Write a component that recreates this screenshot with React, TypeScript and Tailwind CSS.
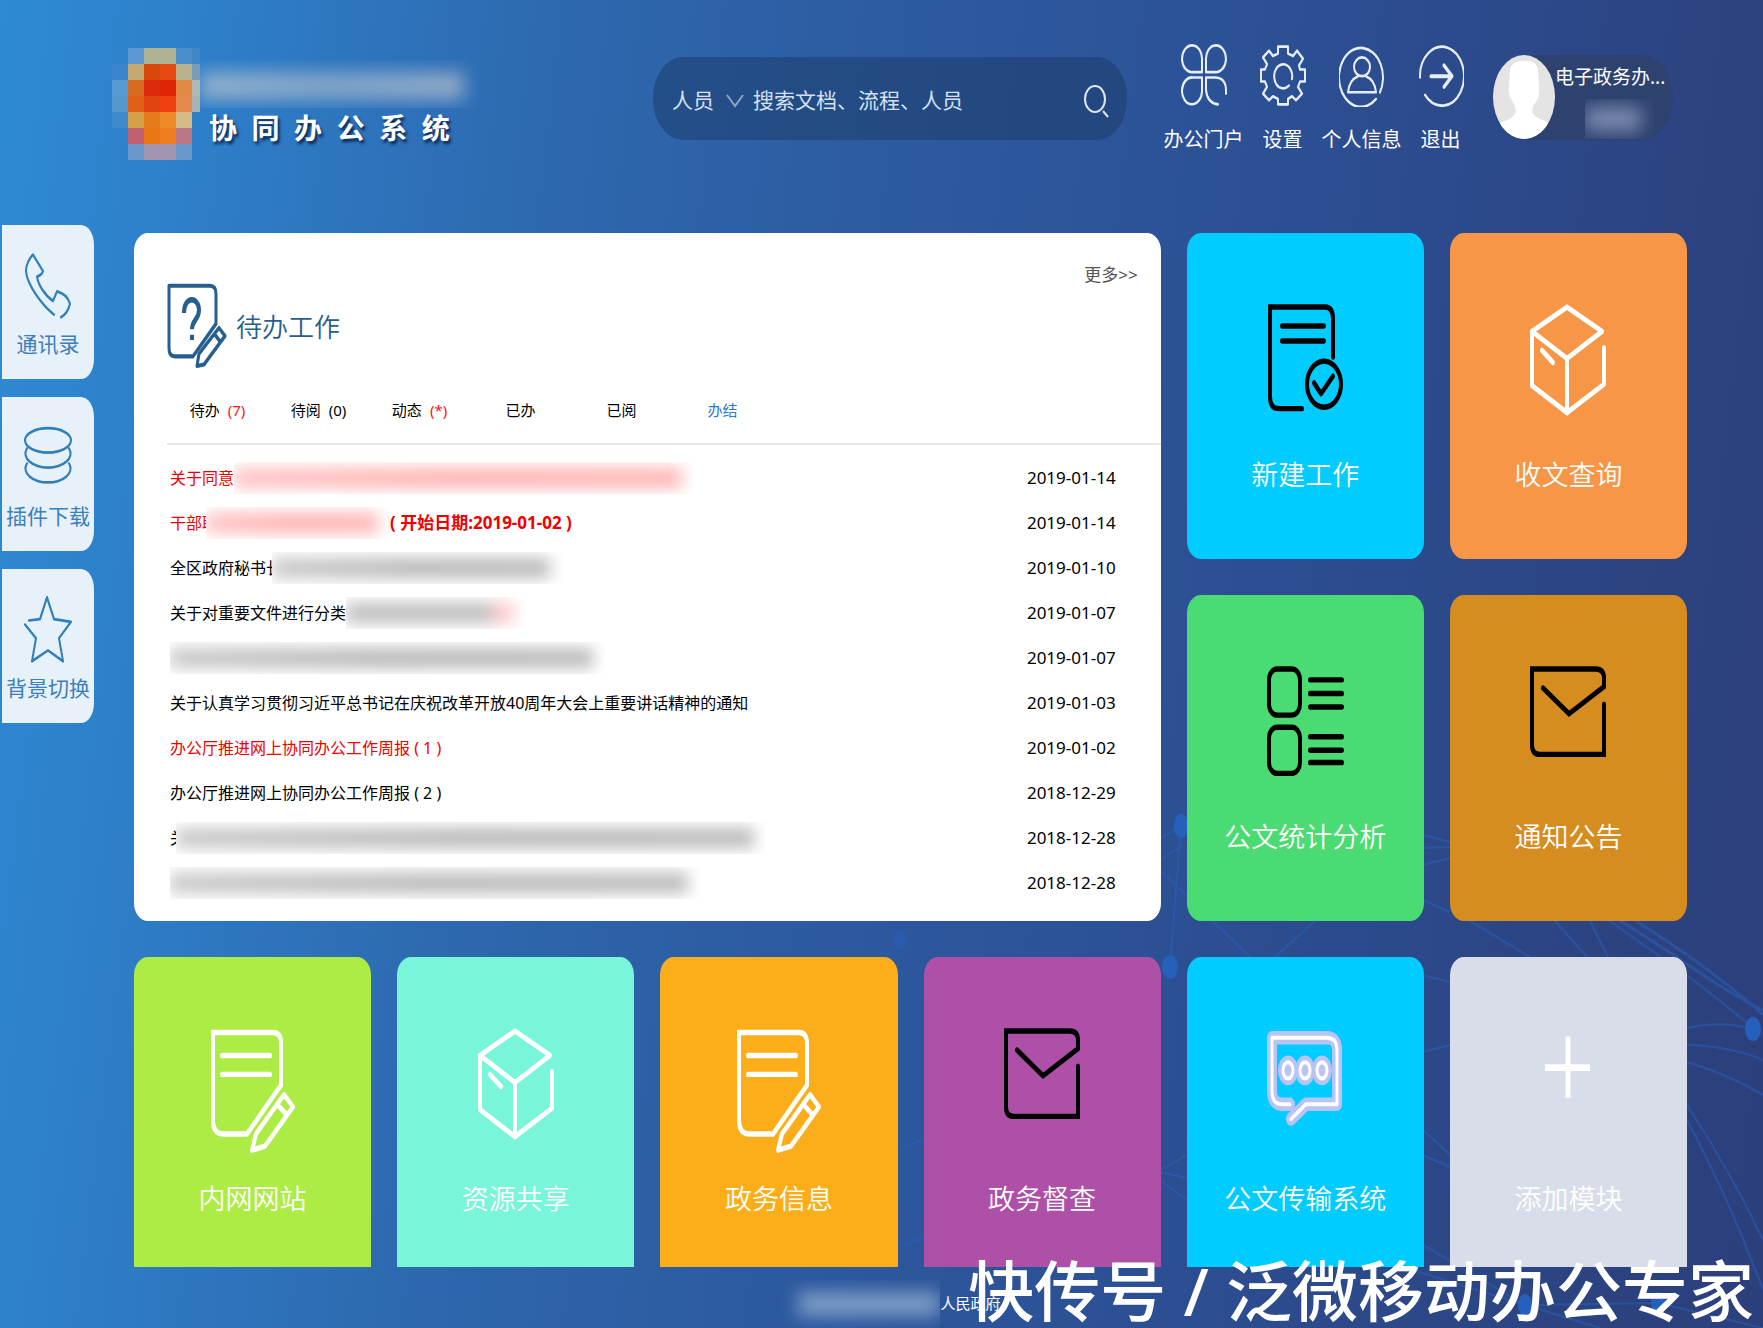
import React from 'react';
import { clsx } from 'clsx';

const BoxIcon = () => (
  <>
    <path d="M14 21 49 3 84 21 49 41 14 21V61L49 81 86 60V33" />
    <path d="M49 41V81M24 35l11 9" />
  </>
);

const EnvelopeIcon = () => (
  <path d="M86 29V66H22Q14 66 14 59V3H78Q86 3 86 10V16L51 36 25 17" strokeLinejoin="miter" />
);

const NotePencilIcon = () => (
  <>
    <path d="M10 4H70Q78 4 78 12V43L44 79H21Q10 79 10 69Z" strokeLinejoin="miter" />
    <path d="M19 21H67M19 35H67" />
    <path d="M49 91 53 79 81 50 90 59 62 88ZM74 57l10 8" />
  </>
);

const DocCheckIcon = () => (
  <>
    <path d="M47 78H24Q15 78 15 69V3H70Q78 3 78 12V40" strokeLinejoin="miter" />
    <path d="M27 17H69M27 28H69" />
    <circle cx="69" cy="60" r="17" />
    <path d="m59 59 7 8 12-13" />
  </>
);

const ListIcon = () => (
  <>
    <rect x="14" y="3" width="31" height="34" rx="8" />
    <rect x="14" y="46" width="31" height="34" rx="8" />
    <path d="M55 11H87M55 21H87M55 31H87M55 53H87M55 63H87M55 72H87" />
  </>
);

const ChatShape = () => (
  <>
    <path d="M35 57H27Q17 57 17 47V8H72Q82 8 82 17V57H51L36 68" />
    <ellipse cx="33" cy="32" rx="5" ry="6" />
    <ellipse cx="50" cy="32" rx="5" ry="6" />
    <ellipse cx="67" cy="32" rx="5" ry="6" />
  </>
);

const ChatIcon = () => (
  <>
    <g stroke="#b9c4f6" strokeWidth="10">
      <ChatShape />
    </g>
    <g strokeWidth="3">
      <ChatShape />
    </g>
  </>
);

const PlusIcon = () => (
  <path d="M27 30H72M50 7V52" strokeWidth="5" strokeLinecap="butt" />
);

interface TileProps {
  label: string;
  icon: React.ReactNode;
  color: string;
  dark?: boolean;
  short?: boolean;
}

const Tile: React.FC<TileProps> = ({ label, icon, color, dark, short }) => (
  <button
    type="button"
    className={clsx(
      'flex flex-col items-center pt-[70px] text-white',
      short ? 'h-[310px] rounded-t-[14px_18px]' : 'h-[326px] rounded-[14px/18px]',
      color
    )}
  >
    <svg
      viewBox="0 0 100 96"
      preserveAspectRatio="none"
      className={clsx('h-[130px] w-[100px]', dark ? 'text-black' : 'text-white')}
      fill="none"
      stroke="currentColor"
      strokeWidth="4"
      strokeLinecap="round"
      strokeLinejoin="round"
      aria-hidden="true"
    >
      {icon}
    </svg>
    <span className="mt-6 text-[27px] leading-9 font-[350]">{label}</span>
  </button>
);

const sideItems = [
  {
    label: '通讯录',
    icon: (
      <path d="M31 46C19 39 4 24 3 14 3 9 7 4 10 2L20 14Q19 17 14 18C15 24 22 32 30 36L34 29Q44 31 47 38 45 45 38 48" />
    ),
  },
  {
    label: '插件下载',
    icon: (
      <>
        <ellipse cx="25" cy="12" rx="23" ry="9" />
        <path d="M4 18C-2 25 10 32 25 32S52 25 46 18M4 29C-2 36 10 43 25 43S52 36 46 29" />
      </>
    ),
  },
  {
    label: '背景切换',
    icon: (
      <path d="M6 18 17 17 24 1 31 17 48 19 36 31 40 48 25 40 9 48 13 31 2 21" />
    ),
  },
];

const navItems = [
  {
    label: '办公门户',
    icon: (
      <path d="M21 21H12A10 10 0 1 1 21 12ZM25 21V12A10 10 0 1 1 34 21ZM21 25V35A10 10 0 1 1 12 25ZM45 37V35Q45 25 34 25H25V34Q26 44 37 45" />
    ),
  },
  {
    label: '设置',
    icon: (
      <>
        <path d="M18 2H28V7L33 9 37 5 43 11 39 16 40 19H45V28H40L38 32 42 37 36 42 32 39 28 41V45H18V41L13 39 9 42 3 37 7 32 5 28H1V19H5L7 15 3 10 9 5 13 9 18 7Z" />
        <path d="M29 31A9 9 0 1 1 32 26" />
      </>
    ),
  },
  {
    label: '个人信息',
    icon: (
      <>
        <path d="M37 41A22 22 0 1 1 41 36" />
        <ellipse cx="23" cy="17" rx="8" ry="7" />
        <path d="M19 24Q10 27 9 36H37Q36 27 27 24" />
      </>
    ),
  },
  {
    label: '退出',
    icon: (
      <>
        <path d="M2 25A22 22 0 1 1 7 38" />
        <path d="M13 24H34M26 16 34 24 26 32" strokeWidth="3" />
      </>
    ),
  },
];

const tabs = [
  { label: '待办', count: '(7)', red: true },
  { label: '待阅', count: '(0)' },
  { label: '动态', count: '(*)', red: true },
  { label: '已办' },
  { label: '已阅' },
  { label: '办结', active: true },
];

// Hidden part of a title
const Redacted: React.FC<{ width: string; color: string }> = ({ width, color }) => (
  <span className={clsx('flex h-8 items-center overflow-hidden pr-3', width)}>
    <span className={clsx('h-5 w-full blur-[8px]', color)} />
  </span>
);

const GREY = 'bg-linear-to-r from-[#c8c8c8] via-[#b8b8b8] to-[#bababa]';
const PINK = 'bg-linear-to-r from-[#ffc2c2] via-[#ffb0b0] to-[#ffb4b4]';

const works = [
  { date: '2019-01-14', red: true, title: <>关于同意<Redacted width="w-[460px]" color={PINK} /></> },
  {
    date: '2019-01-14',
    red: true,
    title: (
      <>
        <span className="w-9 overflow-hidden">干部职</span>
        <Redacted width="w-[184px]" color={PINK} />
        <b className="text-[17px]">( 开始日期:2019-01-02 )</b>
      </>
    ),
  },
  {
    date: '2019-01-10',
    title: (
      <>
        <span className="w-[102px] overflow-hidden">全区政府秘书长</span>
        <Redacted width="w-[290px]" color={GREY} />
      </>
    ),
  },
  {
    date: '2019-01-07',
    title: (
      <>
        关于对重要文件进行分类
        <Redacted width="w-[180px]" color="bg-linear-to-r from-[#bdbdbd] from-85% to-[#ffc8c8] to-90%" />
      </>
    ),
  },
  { date: '2019-01-07', title: <Redacted width="w-[435px]" color={GREY} /> },
  { date: '2019-01-03', title: '关于认真学习贯彻习近平总书记在庆祝改革开放40周年大会上重要讲话精神的通知' },
  { date: '2019-01-02', red: true, title: '办公厅推进网上协同办公工作周报 ( 1 )' },
  { date: '2018-12-29', title: '办公厅推进网上协同办公工作周报 ( 2 )' },
  {
    date: '2018-12-28',
    title: (
      <>
        <span className="w-[6px] overflow-hidden">关</span>
        <Redacted width="w-[590px]" color={GREY} />
      </>
    ),
  },
  { date: '2018-12-28', title: <Redacted width="w-[530px]" color={GREY} /> },
];

const logoCells = [
  ['', '#5b98d0', '#b0b294', '#b0b294', '#4c8ec9', '#4185c6'],
  ['#3a85cb', '#c4a872', '#d8480e', '#e44a12', '#bab28a', '#7a9cb8'],
  ['#559ad2', '#d86a22', '#dc2a0a', '#de2606', '#e08844', '#b0b8b8'],
  ['#5598d0', '#e06018', '#e04410', '#f04010', '#e58a4c', '#a5b4b8'],
  ['#3e8acc', '#d4a04a', '#e47c18', '#ee8a28', '#d4bc88', ''],
  ['', '#c06070', '#e87814', '#f07c24', '#b87888', ''],
  ['', '#6898cc', '#a094b0', '#a094b0', '#6898cc', ''],
];

const Logo = () => (
  <svg viewBox="0 0 88 112" className="h-[112px] w-[88px] shrink-0" shapeRendering="crispEdges" aria-hidden="true">
    {logoCells.map((row, y) =>
      row.map((fill, x) =>
        fill ? <rect key={`${x}-${y}`} x={x * 16} y={y * 16} width="16" height="16" fill={fill} /> : null
      )
    )}
  </svg>
);

const Backdrop = () => (
  <svg
    viewBox="0 0 1763 1328"
    preserveAspectRatio="none"
    className="pointer-events-none absolute inset-0 -z-10 h-full w-full"
    fill="none"
    stroke="#2a62bb"
    strokeWidth="2"
    aria-hidden="true"
  >
    <g opacity="0.5">
      <path d="M1160 838 1181 826M1160 870 1250 957M1170 967 1181 826M1160 860 1183 845M1315 921 1275 957" />
      <path d="M1423 835 1450 842M1423 848 1450 847M1423 865 1450 858M1423 900 1450 912" />
      <path d="M1470 921 1530 957M1555 921 1587 957M1590 921 1608 957M1610 921 1700 985 1750 1025" />
      <path d="M1620 921C1670 950 1720 990 1763 1010M1636 921C1690 955 1730 985 1763 1015" strokeWidth="3" />
      <path d="M1687 1028Q1720 1020 1753 1029M1687 1045Q1730 1046 1763 1060M1687 1062Q1730 1075 1763 1095" />
      <path d="M1687 1105Q1730 1170 1763 1240M1687 1120Q1730 1200 1763 1290" />
      <path d="M1160 1170 1187 1155M1160 1172 1187 1178M1160 1180 1187 1200M900 1148 923 1140M900 1246 923 1238" />
      <path d="M1423 975 1450 982M1423 1052 1450 1045M1423 1130 1450 1155M1423 1155 1450 1167" />
      <path d="M1423 1245 1525 1305 1658 1303M1400 1266 1525 1305M1525 1305 1600 1328M1658 1303 1763 1328" />
    </g>
    <g fill="#2660bd" stroke="none">
      <ellipse cx="1181" cy="826" rx="7" ry="12" />
      <ellipse cx="1170" cy="967" rx="8" ry="12" />
      <ellipse cx="1753" cy="1029" rx="8" ry="12" />
      <ellipse cx="900" cy="940" rx="7" ry="11" opacity="0.5" />
      <ellipse cx="1525" cy="1305" rx="7" ry="11" />
      <ellipse cx="1658" cy="1303" rx="7" ry="11" />
    </g>
  </svg>
);

const Header = () => (
  <header className="flex h-[225px] items-start pr-[90px] pl-[112px] text-white">
    <div className="flex pt-12">
      <Logo />
      <div className="flex flex-col pt-3">
        <div className="h-[48px] w-[280px] overflow-hidden pt-3">
          <div className="h-7 w-[264px] bg-linear-to-r from-[#a9bccf] via-[#98b0cc] to-[#a9b8cc] opacity-80 blur-[9px]" />
        </div>
        <div className="pl-[9px] text-[28px] leading-10 font-bold whitespace-pre [text-shadow:2px_3px_3px_rgba(0,20,60,0.8)]">
          协  同  办  公  系  统
        </div>
      </div>
    </div>

    <form className="mt-[57px] ml-auto flex h-[83px] w-[474px] items-center rounded-[30px/42px] bg-[#1a3a66]/50 pt-1 pr-[18px] pl-[19px] text-[21px] text-[#d5e0f0]">
      <select aria-label="搜索类型" className="w-[50px] appearance-none bg-transparent">
        <option>人员</option>
      </select>
      <svg viewBox="0 0 18 14" className="ml-1 h-[14px] w-[18px] shrink-0" fill="none" stroke="#8fa3c4" strokeWidth="2" aria-hidden="true">
        <path d="M1 1 9 12 17 1" />
      </svg>
      <input
        type="text"
        aria-label="搜索"
        placeholder="搜索文档、流程、人员"
        className="ml-[9px] min-w-0 flex-1 bg-transparent outline-none placeholder:text-[#d5e0f0]"
      />
      <button type="submit" aria-label="搜索">
        <svg viewBox="0 0 26 34" className="h-[34px] w-[26px]" fill="none" stroke="#dde6f5" strokeWidth="2" aria-hidden="true">
          <ellipse cx="12" cy="15" rx="10" ry="13" />
          <path d="m20 27 5 6" />
        </svg>
      </button>
    </form>

    <nav className="mt-11 ml-[37px] flex">
      {navItems.map((item) => (
        <a key={item.label} href="#" className="flex w-[79px] flex-col items-center gap-[18px] whitespace-nowrap">
          <svg
            viewBox="0 0 46 47"
            preserveAspectRatio="none"
            className="h-[63px] w-[46px]"
            fill="none"
            stroke="#e6eefb"
            strokeWidth="2"
            strokeLinecap="round"
            strokeLinejoin="round"
            aria-hidden="true"
          >
            {item.icon}
          </svg>
          <span className="text-[20px] leading-[30px]">{item.label}</span>
        </a>
      ))}
    </nav>

    <div className="mt-[55px] ml-[13px] flex h-[85px] w-[180px] rounded-[32px/42px] bg-[#2e4270]">
      <svg viewBox="0 0 62 85" className="h-[85px] w-[62px] shrink-0" aria-hidden="true">
        <defs>
          <clipPath id="avatar">
            <ellipse cx="31" cy="42" rx="31" ry="42" />
          </clipPath>
        </defs>
        <g clipPath="url(#avatar)">
          <rect width="62" height="85" fill="#e4e4e4" />
          <path
            d="M17 14Q20 5 31 6 44 4 45 16L46 32Q47 40 44 45 40 50 39 55 39 62 52 66L62 70V85H0V70L12 66Q23 62 23 55 22 50 18 44 15 38 16 32Z"
            fill="#fff"
          />
        </g>
      </svg>
      <div className="min-w-0 flex-1">
        <div className="pt-2 text-[19px] leading-7">电子政务办...</div>
        <div className="mt-2 ml-[30px] h-10 w-[70px] overflow-hidden pt-2">
          <div className="h-6 w-14 bg-[#7d8caf] blur-[9px]" />
        </div>
      </div>
    </div>
  </header>
);

const TodoPanel = () => (
  <section className="col-span-4 row-span-2 rounded-[14px/18px] bg-white pt-[26px] pl-[33px] text-black">
    <div className="flex justify-end pr-[23px]">
      <a href="#" className="text-[17px] leading-8 text-[#555]">更多&gt;&gt;</a>
    </div>
    <div className="-mt-2 flex items-center gap-[9px] text-[#265f8f]">
      <svg
        viewBox="0 0 60 64"
        preserveAspectRatio="none"
        className="h-[87px] w-[60px]"
        fill="none"
        stroke="currentColor"
        strokeWidth="3"
        strokeLinejoin="round"
        aria-hidden="true"
      >
        <path d="M2 2H43Q49 2 49 8V30L26 54H8Q2 54 2 48Z" />
        <path d="M30 61 32 52 52 33 58 39 37 60ZM47 37l6 6" />
        <path d="M17 22C17 9 32 10 32 20 32 27 25 27 25 34M25 38v4" strokeWidth="4" />
      </svg>
      <h2 className="text-[26px] leading-10 font-[350]">待办工作</h2>
    </div>
    <div className="mt-1 flex h-[71px] border-b-2 border-[#e8e8e8]">
      {tabs.map((tab) => (
        <button
          key={tab.label}
          type="button"
          className={clsx('flex h-[72px] w-[101px] items-center justify-center gap-2 text-[15px]', tab.active && 'text-[#2b78d4]')}
        >
          {tab.label}
          {tab.count && <span className={clsx(tab.red && 'text-[#f01818]')}>{tab.count}</span>}
        </button>
      ))}
    </div>
    <ul className="pt-[10px] pr-[45px] pl-[3px] text-[16px]">
      {works.map((work, i) => (
        <li key={i} className="flex h-[45px] items-center justify-between">
          <a href="#" className={clsx('flex items-center whitespace-nowrap', work.red && 'text-[#f00000]')}>
            {work.title}
          </a>
          <time className="text-[17px]">{work.date}</time>
        </li>
      ))}
    </ul>
  </section>
);

const App = () => (
  <div className="relative isolate flex min-h-screen flex-col overflow-hidden bg-[linear-gradient(97deg,#2e8ad4_0%,#2e80ca_10%,#2d68ae_30%,#2d5ca2_45%,#2c4f93_68%,#2c4482_88%,#2b3f7b_100%)] font-['Noto_Sans','Noto_Sans_CJK_SC',sans-serif]">
    <Backdrop />
    <Header />
    <div className="flex">
      <aside className="flex w-[94px] shrink-0 flex-col gap-[18px] pl-[2px]">
        {sideItems.map((item) => (
          <button
            key={item.label}
            type="button"
            className="flex h-[154px] flex-col items-center rounded-r-[13px_20px] bg-[#e6f1fa] pt-[27px] text-[#3b7fbb]"
          >
            <svg
              viewBox="0 0 50 50"
              preserveAspectRatio="none"
              className="h-[68px] w-[50px]"
              fill="none"
              stroke="#2f7fb9"
              strokeWidth="2"
              strokeLinecap="round"
              strokeLinejoin="round"
              aria-hidden="true"
            >
              {item.icon}
            </svg>
            <span className="mt-2 text-[21px] leading-8 whitespace-nowrap">{item.label}</span>
          </button>
        ))}
      </aside>
      <main className="grid flex-1 grid-cols-6 gap-x-[26px] gap-y-9 pt-2 pr-[76px] pl-10">
        <TodoPanel />
        <Tile label="新建工作" icon={<DocCheckIcon />} color="bg-[#00ccff]" dark />
        <Tile label="收文查询" icon={<BoxIcon />} color="bg-[#f79646]" />
        <Tile label="公文统计分析" icon={<ListIcon />} color="bg-[#4adb72]" dark />
        <Tile label="通知公告" icon={<EnvelopeIcon />} color="bg-[#d68d1f]" dark />
        <Tile label="内网网站" icon={<NotePencilIcon />} color="bg-[#adeb45]" short />
        <Tile label="资源共享" icon={<BoxIcon />} color="bg-[#79f5d9]" short />
        <Tile label="政务信息" icon={<NotePencilIcon />} color="bg-[#fbae1a]" short />
        <Tile label="政务督查" icon={<EnvelopeIcon />} color="bg-[#ae50a8]" dark short />
        <Tile label="公文传输系统" icon={<ChatIcon />} color="bg-[#00ccff]" short />
        <Tile label="添加模块" icon={<PlusIcon />} color="bg-[#d8dde9]" short />
      </main>
    </div>
    <footer className="flex h-[61px] items-center justify-center pt-3 text-[15px] text-white">
      <span className="flex h-12 w-[178px] items-center overflow-hidden pl-9">
        <span className="h-6 w-full bg-[#7f9dc8] blur-[9px]" />
      </span>
      人民政府
    </footer>
    <div className="absolute right-[9px] bottom-0 text-[66px] leading-[76px] font-medium whitespace-nowrap text-white">
      快传号 / 泛微移动办公专家
    </div>
  </div>
);

export default App;
